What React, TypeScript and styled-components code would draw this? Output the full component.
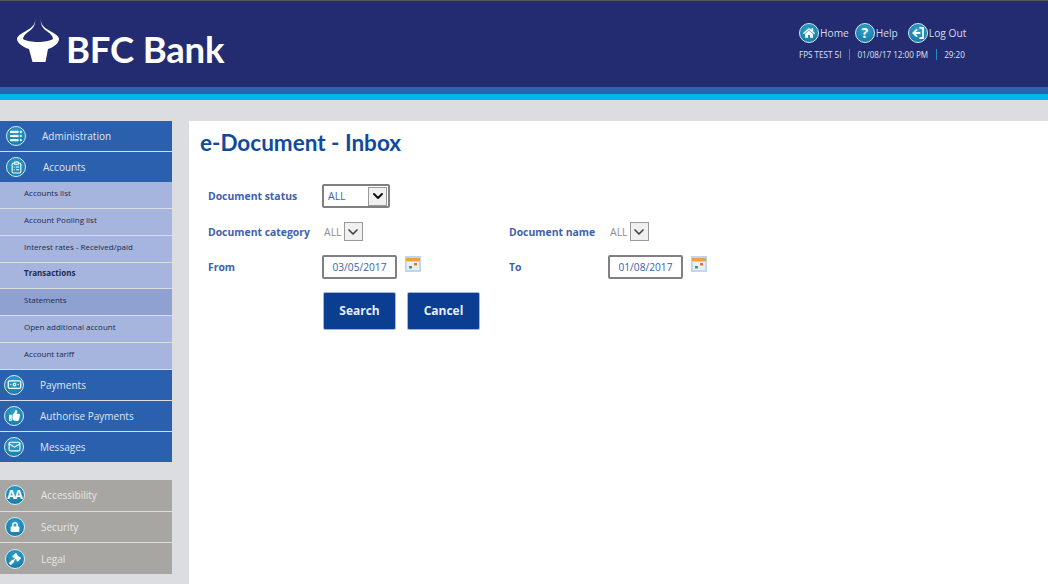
import React from 'react'
import styled, { createGlobalStyle } from 'styled-components'
import { ClipboardList, Mail, ChevronDown, Banknote } from 'lucide-react'
import { FaGavel, FaHome, FaLock, FaThumbsUp } from 'react-icons/fa'

const GlobalStyle = createGlobalStyle`
  html, body {
    margin: 0;
    padding: 0;
    background: #dcdde0;
    font-family: "Open Sans", "Liberation Sans", sans-serif;
  }
`

const Page = styled.div`
  width: 1048px;
  height: 584px;
  overflow: hidden;
  display: flex;
  flex-direction: column;
`

const Header = styled.header`
  height: 86px;
  flex: none;
  border-top: 1px solid #55565c;
  background: #232c70;
  display: flex;
  justify-content: space-between;
  padding: 0 81px 0 17px;
`

const Brand = styled.div`
  display: flex;
  align-items: flex-start;
  gap: 6px;
  padding-top: 16px;
`

const BrandName = styled.span`
  font-family: "Lato", sans-serif;
  font-size: 36.5px;
  line-height: 44px;
  font-weight: 700;
  color: #fff;
  letter-spacing: -0.2px;
  margin-top: 10px;
`

const TopRight = styled.div`
  width: 168px;
  padding-top: 22px;
`

const TopLinks = styled.div`
  display: flex;
  align-items: center;
`

const TopLink = styled.a<{ $gap: number }>`
  display: flex;
  align-items: center;
  gap: 1px;
  margin-right: ${p => p.$gap}px;
  font-size: 10.2px;
  color: #d5daf0;
  white-space: nowrap;
`

const Status = styled.div`
  display: flex;
  align-items: center;
  margin-top: 6px;
  font-size: 8.1px;
  color: #dfe3f5;
  white-space: nowrap;
`

const StatusItem = styled.span<{ $divider?: boolean }>`
  ${p => p.$divider && 'border-left: 1px solid #1e8fc9; margin-left: 8px; padding-left: 7px;'}
  line-height: 11px;
`

const Stripes = styled.div`
  height: 13px;
  flex: none;
  border-top: 7px solid #2b64ae;
  background: #00b5ec;
  box-sizing: border-box;
`

const Body = styled.div`
  flex: 1;
  display: flex;
  gap: 17px;
  padding-top: 21px;
  min-height: 0;
`

const Sidebar = styled.nav`
  width: 172px;
  flex: none;
  display: flex;
  flex-direction: column;
`

const MenuRow = styled.div<{ $grey?: boolean; $flush?: boolean; $badgeLeft: number; $textLeft: number }>`
  height: ${p => (p.$grey ? '30.7px' : '30px')};
  margin-bottom: ${p => (p.$flush ? 0 : '1px')};
  background: ${p => (p.$grey ? '#a8a6a3' : '#2b60ae')};
  display: grid;
  grid-template-columns: ${p => p.$textLeft - p.$badgeLeft}px 1fr;
  align-items: center;
  font-size: 10px;
  color: ${p => (p.$grey ? '#e6e6e6' : '#dfe6f5')};
  padding-left: ${p => p.$badgeLeft}px;
`

const SubRow = styled.div<{ $strong?: boolean; $active?: boolean }>`
  height: 25.85px;
  padding-bottom: 5px;
  box-sizing: border-box;
  margin-bottom: 1px;
  background: ${p => (p.$active ? '#8fa1d0' : '#a6b5de')};
  display: flex;
  align-items: center;
  padding-left: 24px;
  font-size: 8px;
  font-weight: ${p => (p.$strong ? 700 : 400)};
  color: #20294f;
`

const MenuGap = styled.div`
  height: 17px;
  flex: none;
`

const Badge = styled.span<{ $size: number }>`
  width: ${p => p.$size}px;
  height: ${p => p.$size}px;
  border-radius: 50%;
  box-sizing: border-box;
  border: 1.5px solid #d8eef6;
  background: radial-gradient(circle at 50% 35%, #2fa3cf, #12719f);
  color: #fff;
  display: inline-flex;
  align-items: center;
  justify-content: center;
  flex: none;
  font-weight: 700;
  line-height: 1;
`

const BadgeLetters = styled.span`
  font-size: 12px;
  letter-spacing: -1px;
  margin-left: -1px;
`

const HelpMark = styled.span`
  font-size: 14px;
`

const Main = styled.main`
  flex: 1;
  background: #fff;
  padding: 9px 0 0 11px;
`

const Title = styled.h1`
  margin: 0;
  font-family: "Lato", sans-serif;
  font-size: 22.5px;
  line-height: 26px;
  font-weight: 700;
  color: #0f4a9f;
`

const Form = styled.div`
  display: grid;
  grid-template-columns: 114px 187px 99px auto;
  grid-auto-rows: 35.5px;
  align-items: center;
  margin: 22.5px 0 0 8px;
`

const Label = styled.label`
  font-size: 10.4px;
  font-weight: 700;
  color: #3d62ad;
`

const Field = styled.div`
  display: flex;
  align-items: center;
`

const BoxedSelect = styled.div`
  width: 68px;
  height: 24px;
  box-sizing: border-box;
  border: 2px solid #807f82;
  border-radius: 2px;
  display: flex;
  align-items: center;
  justify-content: space-between;
  padding: 0 1px 0 4px;
  font-size: 10.5px;
  color: #3d62ad;
`

const PlainSelect = styled.div`
  display: flex;
  align-items: center;
  gap: 2px;
  padding-left: 2px;
  font-size: 10.5px;
  color: #8c8c8c;
`

const Arrow = styled.span<{ $dark?: boolean }>`
  width: 19px;
  height: 19px;
  box-sizing: border-box;
  border: 1px solid #9a9a9a;
  background: #f0f0f0;
  display: inline-flex;
  align-items: center;
  justify-content: center;
  color: ${p => (p.$dark ? '#111' : '#444')};
`

const DateBox = styled.div`
  width: 75px;
  height: 24px;
  box-sizing: border-box;
  border: 2px solid #807f82;
  border-radius: 2px;
  display: flex;
  align-items: center;
  justify-content: center;
  font-size: 10.2px;
  color: #3d62ad;
`

const CalendarIcon = styled.svg`
  margin: -7px 0 0 8px;
`

const Buttons = styled.div`
  grid-column: 2 / 4;
  display: flex;
  gap: 13px;
  margin-left: 2px;
  position: relative;
  top: 8px;
`

const Button = styled.button`
  width: 71px;
  height: 36px;
  border: none;
  border-radius: 1px;
  box-shadow: 0 0 0 1px #9db7dc;
  background: #0b3d91;
  color: #e8eef8;
  font-family: "Open Sans", sans-serif;
  font-size: 12px;
  font-weight: 700;
  padding: 0;
`

const BullLogo = () => (
  <svg width="43" height="46" viewBox="0 0 43 46">
    <path
      fill="#fff"
      d="M18 1C19 8 14 11 9 14C4 17 0 19 0 22C0 26 6 30 12 32L15.5 45L28.5 45L31 32C37 30 42 26 42 22C42 19 38 17 33 14C28 11 23 8 24 1C23 8 26 12 31 15C34 17 36 20 36 22C30 26 12 26 6 22C6 20 8 17 11 15C16 12 19 8 18 1Z"
    />
  </svg>
)

const ListIcon = () => (
  <svg width="14" height="12" viewBox="0 0 16 14" fill="#fff">
    <rect x="1" y="1" width="10" height="2.6" rx="1" />
    <rect x="1" y="5.7" width="10" height="2.6" rx="1" />
    <rect x="1" y="10.4" width="10" height="2.6" rx="1" />
    <circle cx="13.6" cy="2.3" r="1.3" />
    <circle cx="13.6" cy="7" r="1.3" />
    <circle cx="13.6" cy="11.7" r="1.3" />
  </svg>
)

const LogoutIcon = () => (
  <svg width="14" height="12" viewBox="0 0 15 13" fill="none" stroke="#fff" strokeWidth="2">
    <path d="M9 1h4v11H9" />
    <path d="M10 6.5H3M6.5 2.5l-4 4 4 4" />
  </svg>
)

const Calendar = () => (
  <CalendarIcon width="16" height="16" viewBox="0 0 16 16">
    <rect width="16" height="16" fill="#bcd8ee" />
    <rect x="1" y="2" width="14" height="3" fill="#f0a040" />
    <rect x="2" y="6" width="12" height="8" fill="#e8f1f7" />
    <rect x="9" y="7" width="3" height="2.5" fill="#e0793a" />
    <rect x="4" y="10" width="3" height="2.5" fill="#46a046" />
  </CalendarIcon>
)

const mainMenu = [
  { label: 'Payments', icon: <Banknote size={15} /> },
  { label: 'Authorise Payments', icon: <FaThumbsUp size={11} /> },
  { label: 'Messages', icon: <Mail size={13} /> },
]

const subMenu = [
  { label: 'Accounts list' },
  { label: 'Account Pooling list' },
  { label: 'Interest rates - Received/paid' },
  { label: 'Transactions', strong: true },
  { label: 'Statements', active: true },
  { label: 'Open additional account' },
  { label: 'Account tariff' },
]

const footerMenu = [
  { label: 'Accessibility', icon: <BadgeLetters>AA</BadgeLetters> },
  { label: 'Security', icon: <FaLock size={10} /> },
  { label: 'Legal', icon: <FaGavel size={12} /> },
]

const App = () => (
  <Page>
    <GlobalStyle />
    <Header>
      <Brand>
        <BullLogo />
        <BrandName>BFC Bank</BrandName>
      </Brand>
      <TopRight>
        <TopLinks>
          <TopLink $gap={6}>
            <Badge $size={20}><FaHome size={12} /></Badge>Home
          </TopLink>
          <TopLink $gap={10}>
            <Badge $size={20}><HelpMark>?</HelpMark></Badge>Help
          </TopLink>
          <TopLink $gap={0}>
            <Badge $size={20}><LogoutIcon /></Badge>Log Out
          </TopLink>
        </TopLinks>
        <Status>
          <StatusItem>FPS TEST 5I</StatusItem>
          <StatusItem $divider>01/08/17 12:00 PM</StatusItem>
          <StatusItem $divider>29:20</StatusItem>
        </Status>
      </TopRight>
    </Header>
    <Stripes />
    <Body>
      <Sidebar>
        <MenuRow $badgeLeft={6} $textLeft={42}>
          <Badge $size={20}><ListIcon /></Badge>
          <span>Administration</span>
        </MenuRow>
        <MenuRow $flush $badgeLeft={6} $textLeft={43}>
          <Badge $size={20}><ClipboardList size={13} /></Badge>
          <span>Accounts</span>
        </MenuRow>
        {subMenu.map(item => (
          <SubRow key={item.label} $strong={item.strong} $active={item.active}>
            {item.label}
          </SubRow>
        ))}
        {mainMenu.map(item => (
          <MenuRow key={item.label} $badgeLeft={4} $textLeft={40}>
            <Badge $size={20}>{item.icon}</Badge>
            <span>{item.label}</span>
          </MenuRow>
        ))}
        <MenuGap />
        {footerMenu.map(item => (
          <MenuRow key={item.label} $grey $badgeLeft={5} $textLeft={41}>
            <Badge $size={20}>{item.icon}</Badge>
            <span>{item.label}</span>
          </MenuRow>
        ))}
      </Sidebar>
      <Main>
        <Title>e-Document - Inbox</Title>
        <Form>
          <Label>Document status</Label>
          <Field>
            <BoxedSelect>
              ALL
              <Arrow $dark><ChevronDown size={16} strokeWidth={3} /></Arrow>
            </BoxedSelect>
          </Field>
          <span />
          <span />
          <Label>Document category</Label>
          <Field>
            <PlainSelect>
              ALL
              <Arrow><ChevronDown size={16} strokeWidth={2.5} /></Arrow>
            </PlainSelect>
          </Field>
          <Label>Document name</Label>
          <Field>
            <PlainSelect>
              ALL
              <Arrow><ChevronDown size={16} strokeWidth={2.5} /></Arrow>
            </PlainSelect>
          </Field>
          <Label>From</Label>
          <Field>
            <DateBox>03/05/2017</DateBox>
            <Calendar />
          </Field>
          <Label>To</Label>
          <Field>
            <DateBox>01/08/2017</DateBox>
            <Calendar />
          </Field>
          <span />
          <Buttons>
            <Button>Search</Button>
            <Button>Cancel</Button>
          </Buttons>
        </Form>
      </Main>
    </Body>
  </Page>
)

export default App
